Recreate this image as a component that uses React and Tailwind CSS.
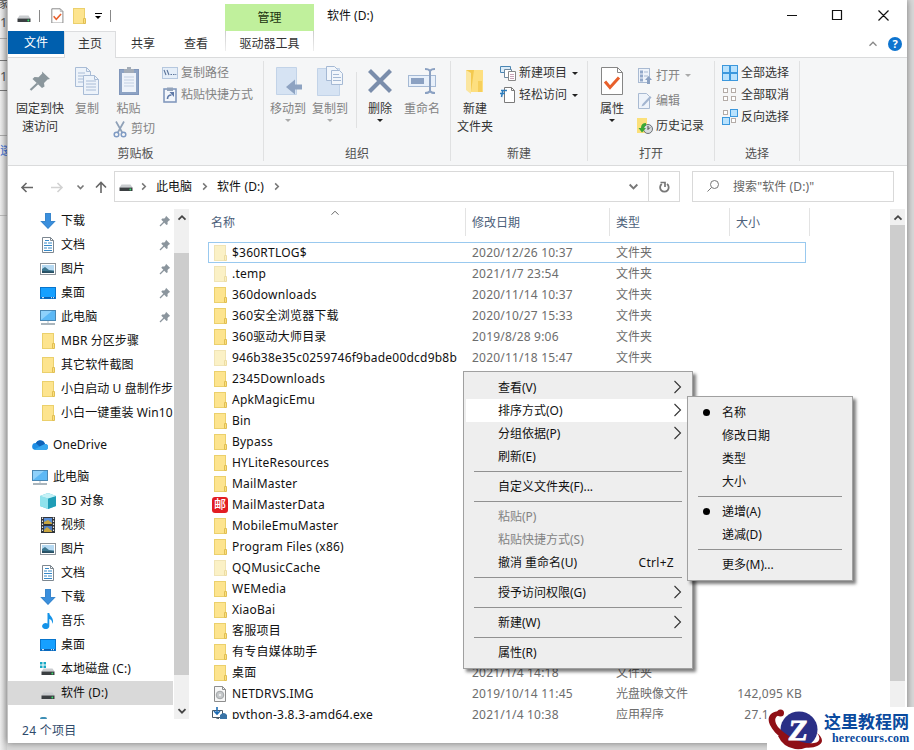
import React from "react";

const FONT = "font-['Noto_Sans','Noto_Sans_CJK_SC',sans-serif]";

/* ---------- small icons ---------- */
const Folder = ({ pale }) => (
  <svg width="16" height="16" viewBox="0 0 16 16" className="shrink-0">
    <rect x="2.500" y=".5" width="11" height="15" fill={pale ? "#fbf1c6" : "#fde48e"} stroke={pale ? "#f0e4b6" : "#ebd06c"} />
    <path d="M12.500 10.500h2v5h-2z" fill={pale ? "#fbf0c0" : "#fde07c"} stroke={pale ? "#ecdca4" : "#e0be54"} />
  </svg>
);
const Down = () => (
  <svg width="16" height="16" viewBox="0 0 16 16"><path d="M5 0h6v8h4.800L8 16 .2 8H5z" fill="#3a8fdd" /><path d="M5.500.500h5v8h4L8 15.200 1.500 8.500h4z" fill="none" stroke="#3a86cc" /></svg>
);
const Doc = () => (
  <svg width="16" height="16" viewBox="0 0 16 16"><path d="M2.500.500h8l3 3v12h-11z" fill="#fff" stroke="#7d8790" /><path d="M10.500.500v3h3" fill="none" stroke="#7d8790" /><path d="M4 6h3M8 6h4M4 8.500h8M4 11h3M8 11h4M4 13.500h8M5 3.500h4" stroke="#3789c8" strokeWidth="1.200" /></svg>
);
const Pic = () => (
  <svg width="16" height="16" viewBox="0 0 16 16"><rect x=".5" y="2.500" width="15" height="11" fill="#fff" stroke="#8d949a" /><path d="M2 4h12v8H2z" fill="#b5d9f2" /><path d="M2 8l3-2 4 3 5 .5V12H2z" fill="#3d7790" /><path d="M2 10l12 .5V12H2z" fill="#274f63" /></svg>
);
const Desk = () => (
  <svg width="16" height="16" viewBox="0 0 16 16"><rect x=".5" y="2.500" width="15" height="11" fill="#16a0ff" stroke="#0875cc" /><path d="M1 12h14v1.500H1z" fill="#0a5fb0" /><path d="M2 12.700h2M11 12.700h1M13 12.700h1" stroke="#fff" /></svg>
);
const PC = () => (
  <svg width="16" height="16" viewBox="0 0 16 16"><rect x=".5" y="1.500" width="15" height="10" fill="#5cb8f5" stroke="#4a87b3" /><path d="M1 11V2h11z" fill="#8ed1fb" /><path d="M7 12h2v2H7z" fill="#d5dee4" /><path d="M1 15h14" stroke="#7c8d98" strokeWidth="1.300" /></svg>
);
const Cloud = () => (
  <svg width="16" height="16" viewBox="0 0 16 16"><path d="M3.500 13a3.500 3.500 0 0 1 .3-7A5 5 0 0 1 13 7a3 3 0 0 1 0 6z" fill="#1f8fe5" /><path d="M3.800 6A5 5 0 0 1 13 7L7.500 9.500z" fill="#0f62b8" /><path d="M2 12.500L13 7a3 3 0 0 1 0 6H3.500z" fill="#38a8ef" /></svg>
);
const Cube = () => (
  <svg width="16" height="16" viewBox="0 0 16 16"><path d="M0 3l8-3 8 3v10l-8 3-8-3z" fill="#4cc4d8" /><path d="M0 3l8 2.500V16l-8-3z" fill="#8fe2ec" /><path d="M8 5.500L16 3v10l-8 3z" fill="#1f9db6" /><path d="M0 3l8-3 8 3-8 2.500z" fill="#c4f1f6" /></svg>
);
const Film = () => (
  <svg width="16" height="16" viewBox="0 0 16 16"><path d="M1 0h14v16H1z" fill="#30343a" /><path d="M4 1h8v6H4z" fill="#5b8fd8" /><path d="M4 9h8v6H4z" fill="#4f7fc4" /><path d="M4 5l4-2 4 3v1H4zM4 13l3-3 5 4v1H4z" fill="#c9a640" /><path d="M2.500.500v15M13.500.500v15" stroke="#e8e8e8" strokeWidth="1.200" strokeDasharray="1.500 1.500" /></svg>
);
const Music = () => (
  <svg width="16" height="16" viewBox="0 0 16 16"><path d="M7.500 0h1.800c.2 3 4 4.200 3.700 8.500-.1 1.200-.6 2-.9 2.500.4-3-1-4.300-2.800-5v6.800A3.600 3 0 1 1 7.500 10.500z" fill="#1593e8" /></svg>
);
const Disk = ({ win }) => (
  <svg width="16" height="16" viewBox="0 0 16 16" className="shrink-0">{win && <path d="M0 1h2.500v2.500H0zM3.500 1H6v2.500H3.500zM0 4.500h2.500V7H0zM3.500 4.500H6V7H3.500z" fill="#18a8c4" />}<path d="M3.500 7.500h9l2 3h-13z" fill="#c9cccf" /><path d="M1.500 10.500h13V14h-13z" fill="#3b3f42" /><circle cx="12.300" cy="12.500" r=".9" fill="#35e06a" /></svg>
);
const PinS = () => (
  <svg width="12" height="12" viewBox="0 0 12 12"><path d="M7 .8L11.200 5l-1.200.5L8.500 7l.2 2.200L7.500 10 2.300 4.700 3.200 3.500l2.200.1L6.700 2z" fill="#8b959d" /><path d="M5 7L1 11" stroke="#8b959d" strokeWidth="1.200" /></svg>
);
const Img = () => (
  <svg width="16" height="16" viewBox="0 0 16 16"><path d="M2.500.500h8l3 3v12h-11z" fill="#f7f7f7" stroke="#8d8d8d" /><path d="M10.500.500v3h3" fill="none" stroke="#8d8d8d" /><circle cx="8" cy="9" r="3.800" fill="#c5c8ca" stroke="#a3a6a8" /><circle cx="8" cy="9" r="1.200" fill="#eee" /></svg>
);
const Py = () => (
  <svg width="16" height="16" viewBox="0 0 16 16"><path d="M.5 3.500h10v7H.5z" fill="#fff" stroke="#4a5a68" /><path d="M3 13l3-2 2 2" fill="none" stroke="#4a5a68" /><path d="M5 0v6M2 4l3 3 3-3" fill="none" stroke="#1e6cb4" strokeWidth="1.600" /><path d="M8 8q4-4 7 0v4H8z" fill="#3873a6" /><path d="M9 13h7v3H9z" fill="#ffd94a" /></svg>
);
const Mail = () => (
  <span className="flex h-4 w-4 shrink-0 items-center justify-center rounded-[3px] bg-[#e21c22] text-[12px] leading-none font-medium text-white">邮</span>
);

const Chev = ({ d = "right", s = 10, c = "#555", w = 1.3 }) => {
  const p = { right: "M3.500 1.500L7 5 3.500 8.500", down: "M1.500 3.200L5 6.700 8.500 3.200", up: "M1.500 6.700L5 3.200 8.500 6.700" }[d];
  return <svg width={s} height={s} viewBox="0 0 10 10" className="shrink-0"><path d={p} fill="none" stroke={c} strokeWidth={w} /></svg>;
};
const Tri = ({ c = "#222" }) => <svg width="6" height="3" viewBox="0 0 6 3" className="shrink-0"><path d="M0 0h6L3 3z" fill={c} /></svg>;

/* ---------- ribbon ---------- */
const Big = ({ w, icon, lines, dim, arrow, arrowColor }) => (
  <div className={`flex shrink-0 flex-col items-center ${w} ${dim ? "text-[#838383]" : "text-[#333]"}`}>
    <div className="mb-[2px] flex h-[34px] items-center justify-center">{icon}</div>
    {lines.map((l) => <div key={l} className="h-[18px] leading-[18px]">{l}</div>)}
    {arrow && <div className="-mt-px flex h-[6px] items-center"><Tri c={arrowColor} /></div>}
  </div>
);
const Small = ({ icon, text, dim, h = "h-[22px]", gap = "gap-[3px]", arrow }) => (
  <div className={`flex items-center ${h} ${gap} ${dim ? "text-[#838383]" : "text-[#333]"}`}>
    <span className="flex h-4 w-4 items-center justify-center">{icon}</span>
    <span>{text}</span>
    {arrow && <span className="ml-[2px] flex"><Tri c={dim ? "#aaa" : "#222"} /></span>}
  </div>
);
const Group = ({ w, label, children }) => (
  <div className={`flex shrink-0 flex-col ${w}`}>
    <div className="flex h-[87px] pt-[6px]">{children}</div>
    <div className="flex h-[18px] items-center justify-center text-[#505050]">{label}</div>
  </div>
);
const Line = () => <div className="mt-[3px] h-[100px] w-px shrink-0 bg-[#e0e1e2]" />;

const BigPin = () => <svg width="24" height="24" viewBox="0 0 24 24"><path d="M14 2.500l8 7.500-2.500.5-3.500 3.500.5 3.500-2.500 1.500L4.500 10l2-2 4 .2L14.200 4.500z" fill="#8b979d" /><path d="M9.500 14.500L2.500 21" stroke="#8b979d" strokeWidth="2.200" /></svg>;
const BigCopy = () => (
  <svg width="26" height="30" viewBox="0 0 26 30"><g fill="#edf3fa" stroke="#a9bcd6"><path d="M1.500 1.500h11l4 4v15h-15z" /><path d="M9.500 9.500h11l4 4v15h-15z" /><path d="M12.500 1.500v4h4M20.500 9.500v4h4M4 7h7M4 10h5M4 13h5M4 16h5M12 15h10M12 18h10M12 21h10M12 24h10" fill="none" /></g></svg>
);
const BigPaste = () => (
  <svg width="22" height="30" viewBox="0 0 22 30"><rect x="1.500" y="3.500" width="19" height="25" fill="#8da3c4" stroke="#8096ba" /><path d="M4 7h14v19H4z" fill="#eef3fa" /><path d="M6 3h3V1h4v2h3v4H6z" fill="#a4adb8" /><path d="M6 11h10M6 14h10M6 17h10M6 20h10" stroke="#c3d0e2" /></svg>
);
const MoveTo = () => (
  <svg width="28" height="30" viewBox="0 0 28 30"><path d="M2.500 1.500h20v27h-20z" fill="#d6e3f3" stroke="#c2d3e8" /><path d="M28 18.500v5h-7v5l-9-7.500 9-7.500v5z" fill="#8ea3c2" /></svg>
);
const CopyTo = () => (
  <svg width="28" height="32" viewBox="0 0 28 32"><path d="M1.500 3.500h22v27h-22z" fill="#d6e3f3" stroke="#c2d3e8" /><g fill="#f2f6fb" stroke="#a5b9d4"><path d="M10.500 1.500h8l3 3v11h-11z" /><path d="M15.500 5.500h8l3 3v11h-11z" /><path d="M17 9.500h6M17 12.500h8M17 15.500h8" /></g></svg>
);
const Del = () => <svg width="26" height="26" viewBox="0 0 26 26"><path d="M2.500 2.500l21 21M23.500 2.500l-21 21" stroke="#7a8dab" strokeWidth="4.200" /></svg>;
const Rename = () => (
  <svg width="30" height="28" viewBox="0 0 30 28"><rect x="1.500" y="8.500" width="27" height="11" fill="#e8f0fa" stroke="#a5b9d4" /><path d="M4 11h13v6H4z" fill="#8ba1c2" /><path d="M18 2q4 0 5 2 1-2 5-2M18 26q4 0 5-2 1 2 5 2M23 4v20" fill="none" stroke="#8ba1c2" strokeWidth="2" /></svg>
);
const BigFolder = () => (
  <svg width="20" height="28" viewBox="0 0 20 28"><path d="M1 3h8l3 2h6v20H4z" fill="#f3c94f" /><path d="M9 3h9v22H6z" fill="#fddf80" /><path d="M1 3l5 3v21l-5-4z" fill="#fbe6a0" /><path d="M13 14h4v11h-4z" fill="#f6cf5c" /></svg>
);
const Props = ({ s = 1 }) => (
  <svg width={24 * s} height={30 * s} viewBox="0 0 24 30"><path d="M1.500 1.500h16l5 5v22h-21z" fill="#fff" stroke="#868686" strokeWidth={s < 1 ? 1.8 : 1} /><path d="M17.500 1.500v5h5" fill="none" stroke="#868686" /><path d="M5 15.500l5 6 9-10" fill="none" stroke="#e8602c" strokeWidth="3" /></svg>
);
const PathI = () => <svg width="16" height="12" viewBox="0 0 16 12"><rect x=".5" y=".5" width="15" height="11" fill="#e5eef8" stroke="#b5c7de" /><path d="M2 3l2 5M5 3l2 5M8.500 7.500h1.500M11 7.500h1.500M13.300 7.500h1" stroke="#5a7399" strokeWidth="1.100" /></svg>;
const PasteLink = () => <svg width="14" height="16" viewBox="0 0 14 16"><rect x="1" y="2" width="12" height="13" fill="#f2f6fb" stroke="#8399bd" strokeWidth="1.600" /><path d="M4 .5h6V4H4z" fill="#93a3ba" /><path d="M4.500 12q0-4 4-4" fill="none" stroke="#607aa8" strokeWidth="1.600" /><path d="M6.500 5H11v5z" fill="#607aa8" /></svg>;
const Cut = () => <svg width="14" height="17" viewBox="0 0 14 17"><path d="M3 .5L9.500 12M11 .5L4.500 12" stroke="#8fa1b8" strokeWidth="1.700" /><g fill="none" stroke="#7f9bc4" strokeWidth="1.500"><circle cx="3.500" cy="13.500" r="2.300" /><circle cx="10.500" cy="13.500" r="2.300" /></g></svg>;
const NewItem = () => <svg width="16" height="16" viewBox="0 0 16 16"><path d="M.5 1.500h10v6H.5z" fill="#dcecf8" stroke="#4a86b4" /><path d="M4.500 4.500h7v8h-7z" fill="#fff" stroke="#6f8aa0" /><path d="M8.500 6.500h7v9h-7z" fill="#fff" stroke="#888" /><path d="M10 9.500h4M10 11.500h4M10 13.500h4" stroke="#c9a2b8" /></svg>;
const Easy = () => <svg width="16" height="16" viewBox="0 0 16 16"><path d="M4.500.500h7l3 3v12h-10z" fill="#fff" stroke="#7a7a7a" /><path d="M11.500.500v3h3" fill="none" stroke="#7a7a7a" /><path d="M1 3.500h6M0 6.500h5M3 3L1.500 10" fill="none" stroke="#2d7dbd" strokeWidth="1.500" /></svg>;
const OpenI = () => <svg width="16" height="16" viewBox="0 0 16 16"><rect x="1.500" y=".5" width="11" height="14" fill="#eef3fa" stroke="#a9bad2" /><path d="M3 2.500h3v3H3zM3 6.500h3v3H3zM3 10.500h3v3H3z" fill="#92a8c9" /><path d="M7 4h4M7 8h4" stroke="#a9bad2" /><path d="M11.500 8L15 12h-2v4h-3v-4H8z" fill="#8ba1c2" /></svg>;
const EditI = () => <svg width="16" height="16" viewBox="0 0 16 16"><path d="M1.500.500h8l3 3v12h-11z" fill="#eef3fa" stroke="#a9bad2" /><path d="M13 3l1.500 1.500-7.500 8-2.500 1 1-2.500z" fill="#a3b5d0" /></svg>;
const Hist = () => <svg width="16" height="16" viewBox="0 0 16 16"><path d="M0 0h10v15H0z" fill="#fbe07a" /><circle cx="11" cy="11" r="4.500" fill="#d9dcde" stroke="#6c7277" /><path d="M11 8v3.500l2-2" fill="none" stroke="#444" /><path d="M9 5Q4 5 4 10H1.500L5 14.500 9 10H7Q7 8 9 7.500z" fill="#3aa835" /></svg>;
const Sel = ({ on }) => (
  <svg width="16" height="16" viewBox="0 0 16 16">{[[0, 0], [8, 0], [0, 8], [8, 8]].map(([x, y], i) => on[i]
    ? <rect key={i} x={x + .5} y={y + .5} width="7" height="7" fill="#b9e2fd" stroke="#3c98dd" />
    : <rect key={i} x={x + 1.5} y={y + 1.5} width="4" height="4" fill="#fff" stroke="#b4aca8" />)}</svg>
);

/* ---------- data ---------- */
const nav = [
  ["下载", Down, 1], ["文档", Doc, 1], ["图片", Pic, 1], ["桌面", Desk, 1], ["此电脑", PC, 1],
  ["MBR 分区步骤", Folder], ["其它软件截图", Folder], ["小白启动 U 盘制作步", Folder], ["小白一键重装 Win10", Folder],
];
const nav2 = [["3D 对象", Cube], ["视频", Film], ["图片", Pic], ["文档", Doc], ["下载", Down], ["音乐", Music], ["桌面", Desk], ["本地磁盘 (C:)", () => <Disk win />], ["软件 (D:)", Disk]];
const files = [
  ["$360RTLOG$", "2020/12/26 10:37", "p"], [".temp", "2021/1/7 23:54", "p"], ["360downloads", "2020/11/14 10:37"],
  ["360安全浏览器下载", "2020/10/27 15:33"], ["360驱动大师目录", "2019/8/28 9:06"], ["946b38e35c0259746f9bade00dcd9b8b", "2020/11/18 15:47", "p"],
  ["2345Downloads"], ["ApkMagicEmu"], ["Bin"], ["Bypass"], ["HYLiteResources"], ["MailMaster"], ["MailMasterData", "", "mail"],
  ["MobileEmuMaster"], ["Program Files (x86)"], ["QQMusicCache", "", "p"], ["WEMedia"], ["XiaoBai"], ["客服项目"], ["有专自媒体助手"],
  ["桌面", "2021/1/4 14:18"], ["NETDRVS.IMG", "2019/10/14 11:45", "img", "光盘映像文件", "142,095 KB"], ["python-3.8.3-amd64.exe", "2021/1/4 10:38", "py", "应用程序", "27,162 KB"],
];

const NavRow = ({ item, sel, base = "pl-8" }) => {
  const [t, Icon, pin] = item;
  return (
    <div className={`flex h-6 shrink-0 items-center overflow-hidden ${base} ${sel ? "mr-px bg-[#d9d9d9]" : ""}`}>
      <span className="flex w-[21px] shrink-0"><Icon /></span>
      <span className="grow tracking-[0.1px]">{t}</span>
      {pin && <span className="mr-[3px]"><PinS /></span>}
    </div>
  );
};
const MenuRow = ({ t, sub, dim, hot, key2 }) => (
  <div className={`mx-[2px] flex h-[23px] items-center pr-[7px] pl-8 ${hot ? "bg-white" : ""} ${dim ? "text-[#838383]" : ""}`}>
    <span className="grow">{t}</span>
    {key2 && <span className="pr-[9px] tracking-[0.3px]">{key2}</span>}
    {sub && <svg width="10" height="14" viewBox="0 0 10 14" className="-mt-[2px]"><path d="M1.500 1L7.500 7l-6 6" fill="none" stroke="#333" strokeWidth="1.100" /></svg>}
  </div>
);
const SubRow = ({ t, dot }) => (
  <div className="flex h-[23px] items-center pl-[15px]">
    <span className="w-[19px]">{dot && <span className="block h-[7px] w-[7px] rounded-full bg-black" />}</span>{t}
  </div>
);
const Sep = () => <div className="mx-[10px] flex h-[7px] items-center"><div className="h-px w-full bg-[#919191]" /></div>;

export default function App() {
  return (
    <div className={`relative flex h-[750px] w-[914px] overflow-hidden bg-[#d9d9d9] whitespace-nowrap text-[12px] leading-[16px] text-[#111] ${FONT}`}>
      <div className="h-[750px] w-[7px] shrink-0 overflow-hidden bg-linear-to-r from-[#efefef] to-[#cfcfcf] text-[#555]">
        <div className="flex h-[39px] flex-col border-b border-[#aaa]">
          <span className="-mt-[6px] -ml-[5px] h-[20px] text-[13px]">缘</span><span className="text-[13px]">1(</span>
        </div>
        <div className="h-[22px] border-b border-[#777]" />
        <div className="h-[30px] border-b border-[#777] pt-[7px] text-[13px]">1</div>
        <div className="h-[45px] border-b border-[#aaa]" />
        <div className="h-[80px] border-b border-[#bbb] pt-[7px] text-[#3d6fd0]">逶</div>
      </div>

      <div className="flex h-[743px] w-[900px] shrink-0 flex-col border-l border-[#c3c3c3] bg-white shadow-[0_0_7px_rgba(0,0,0,0.45)]">
        {/* title bar */}
        <div className="flex h-[31px] shrink-0">
          <div className="flex h-[31px] w-[217px] items-center pl-[8px]">
            <Disk /><div className="ml-[7px] h-3 w-px bg-[#888]" />
            <span className="ml-[11px] flex"><Props s={0.53} /></span>
            <span className="ml-[7px] flex"><Folder /></span>
            <span className="ml-[8px] flex flex-col items-center gap-[2px]"><span className="h-px w-[7px] bg-black" /><Tri c="#000" /></span>
            <div className="ml-[8px] h-3 w-px bg-[#888]" />
          </div>
          <div className="mt-[4px] flex h-[27px] w-[89px] items-center justify-center bg-[#c0f09c] text-[#1d3410]">管理</div>
          <div className="flex grow items-center pl-[13px]">软件 (D:)</div>
          <svg width="138" height="31" viewBox="0 0 138 31"><path d="M18 15.500h10M63.500 10.500h9v9h-9zM109.500 10.500l10 10M119.500 10.500l-10 10" fill="none" stroke="#111" strokeWidth="1.200" /></svg>
        </div>
        {/* tabs */}
        <div className="flex h-[26px] shrink-0 items-start text-[#333]">
          <div className="flex h-[23px] w-[56px] items-center justify-center bg-[#005fae] text-white">文件</div>
          <div className="z-10 flex h-[27px] w-[52px] items-center justify-center border-x border-t border-[#dcdddf] bg-[#f5f6f7] pb-[2px]">主页</div>
          <div className="flex h-[25px] w-[53px] items-center justify-center pl-px">共享</div>
          <div className="flex h-[25px] w-[56px] items-center justify-center pr-[2px]">查看</div>
          <div className="flex h-[25px] w-[89px] justify-center">
            <span className="h-5 w-px bg-linear-to-b from-[#ccc] to-[#eee]" />
            <span className="flex grow items-center justify-center">驱动器工具</span>
            <span className="h-5 w-px bg-linear-to-b from-[#ccc] to-[#eee]" />
          </div>
          <div className="flex h-[26px] grow items-center justify-end gap-[10px] pr-[5px]">
            <Chev d="up" c="#888" w={1.3} />
            <span className="flex h-[14px] w-[14px] items-center justify-center rounded-full bg-[#0e74cf] text-[11px] font-bold text-white">?</span>
          </div>
        </div>
        {/* ribbon */}
        <div className="flex h-[109px] shrink-0 border-y border-[#dadbdc] bg-[#f5f6f7]">
          <Group w="w-[255px]" label="剪贴板">
            <div className="w-1" />
            <Big w="w-[56px]" icon={<BigPin />} lines={["固定到快", "速访问"]} />
            <Big w="w-[38px]" dim icon={<BigCopy />} lines={["复制"]} />
            <div className="w-[55px]">
              <Big w="w-[45px]" dim icon={<BigPaste />} lines={["粘贴"]} />
              <div className="flex h-[22px] items-center gap-[4px] pl-[7px] text-[#838383]"><Cut />剪切</div>
            </div>
            <div className="-mt-[2px] pl-px">
              <Small dim icon={<PathI />} text="复制路径" />
              <Small dim icon={<PasteLink />} text="粘贴快捷方式" />
            </div>
          </Group>
          <Line />
          <Group w="w-[186px]" label="组织">
            <div className="w-[3px]" />
            <Big w="w-[42px]" dim arrow arrowColor="#aaa" icon={<MoveTo />} lines={["移动到"]} />
            <Big w="w-[42px]" dim arrow arrowColor="#aaa" icon={<CopyTo />} lines={["复制到"]} />
            <div className="mt-[8px] mr-[2px] ml-[5px] h-[56px] w-px bg-[#e0e1e2]" />
            <Big w="w-[42px]" arrow icon={<Del />} lines={["删除"]} />
            <Big w="w-[42px]" dim icon={<Rename />} lines={["重命名"]} />
          </Group>
          <Line />
          <Group w="w-[136px]" label="新建">
            <div className="w-[3px]" />
            <Big w="w-[42px]" icon={<BigFolder />} lines={["新建", "文件夹"]} />
            <div className="-mt-[2px] pl-[4px]">
              <Small arrow icon={<NewItem />} text="新建项目" />
              <Small arrow icon={<Easy />} text="轻松访问" />
            </div>
          </Group>
          <Line />
          <Group w="w-[126px]" label="打开">
            <div className="w-[5px]" />
            <Big w="w-[38px]" arrow icon={<Props />} lines={["属性"]} />
            <div className="-mt-[1px] pl-[6px]">
              <Small dim arrow h="h-[25px]" icon={<OpenI />} text="打开" />
              <Small dim h="h-[25px]" icon={<EditI />} text="编辑" />
              <Small h="h-[25px]" icon={<Hist />} text="历史记录" />
            </div>
          </Group>
          <Line />
          <Group w="w-[84px]" label="选择">
            <div className="-mt-[2px] pl-[7px]">
              <Small icon={<Sel on={[1, 1, 1, 1]} />} text="全部选择" />
              <Small icon={<Sel on={[0, 0, 0, 0]} />} text="全部取消" />
              <Small icon={<Sel on={[0, 1, 1, 0]} />} text="反向选择" />
            </div>
          </Group>
          <Line />
        </div>
        {/* address bar */}
        <div className="flex h-[42px] shrink-0 items-center pb-px">
          <svg width="106" height="20" viewBox="0 0 106 20" fill="none" strokeWidth="1.600"><path d="M14 10.500h11M18.500 6L14 10.500l4.500 4.500" stroke="#666" /><path d="M43 10.500h11M49.500 6L54 10.500 49.500 15" stroke="#d2d2d2" /><path d="M69.500 8.500l3 3 3-3" stroke="#777" /><path d="M93 16V5.500M88 10.500l5-5 5 5" stroke="#666" /></svg>
          <div className="flex h-[31px] w-[566px] items-center border border-[#d9d9d9] pl-[3px]">
            <span className="-mt-[3px] flex"><Disk /></span><span className="mx-[5px] flex"><Chev s={9} c="#777" w={1.7} /></span>
            <span className="ml-[3px]">此电脑</span><span className="mx-[8px] flex"><Chev s={9} c="#777" w={1.7} /></span>
            <span className="tracking-[0.1px]">软件 (D:)</span><span className="ml-[8px] flex grow"><Chev s={9} c="#777" w={1.7} /></span>
            <Chev d="down" s={11} c="#777" w={1.7} />
            <div className="ml-[9px] h-full w-px bg-[#d9d9d9]" />
            <svg width="30" height="20" viewBox="0 0 30 20" fill="none"><path d="M12.800 7A4.300 4.300 0 1 0 18 7" stroke="#777" strokeWidth="1.800" /><path d="M11.500 5.500H16V10" stroke="#777" strokeWidth="1.700" /></svg>
          </div>
          <div className="ml-[12px] flex h-[31px] w-[202px] items-center border border-[#d9d9d9] pl-[13px] text-[#666]">
            <svg width="15" height="15" viewBox="0 0 15 15" fill="none" stroke="#777"><circle cx="8.500" cy="5.500" r="4" /><path d="M5.500 8.500L1.500 12.500" /></svg>
            <span className="ml-[12px] tracking-[0.1px]">搜索"软件 (D:)"</span>
          </div>
        </div>
        {/* body */}
        <div className="flex h-[511px] shrink-0 overflow-hidden">
          <div className="flex w-[166px] shrink-0 flex-col overflow-hidden">
            <div className="h-px shrink-0" />
            {nav.map((n) => <NavRow key={n[0]} item={n} />)}
            <div className="h-2 shrink-0" />
            <NavRow base="pl-6" item={["OneDrive", Cloud]} />
            <div className="h-2 shrink-0" />
            <NavRow base="pl-6" item={["此电脑", PC]} />
            {nav2.map((n, i) => <NavRow key={n[0]} item={n} sel={i === 8} />)}
            <div className="mt-[12px] ml-[32px] h-[2px] w-[7px] shrink-0 rounded-t-full bg-[#3f8fb5]" />
          </div>
          <div className="mt-px flex w-[15px] shrink-0 flex-col items-center bg-[#f0f0f0]">
            <div className="flex h-[44px] shrink-0 pt-[4px]"><Chev d="up" c="#444" w={1.8} /></div>
            <div className="h-[422px] w-full shrink-0 bg-[#cdcdcd]" />
            <div className="flex grow items-end pb-[3px]"><Chev d="down" c="#444" w={1.8} /></div>
          </div>
          <div className="flex w-[701px] shrink-0 flex-col overflow-hidden pl-[19px]">
            <div className="flex h-[34px] shrink-0 text-[#4c607a]">
              <div className="flex h-[28px] w-[258px] border-r border-[#e3e3e3] pl-[3px]"><span className="w-[119px] pt-[7px]">名称</span><Chev d="up" c="#666" w={1} /></div>
              <div className="h-[28px] w-[144px] border-r border-[#e3e3e3] pt-[7px] pl-[6px]">修改日期</div>
              <div className="h-[28px] w-[120px] border-r border-[#e3e3e3] pt-[7px] pl-[6px]">类型</div>
              <div className="h-[28px] w-[80px] border-r border-[#e3e3e3] pt-[7px] pl-[6px]">大小</div>
            </div>
            {files.map(([n, d, k, t, s], i) => (
              <div key={n} className={`flex h-[21px] w-[598px] shrink-0 items-center text-[#6d6d6d] ${i === 0 ? "outline outline-1 -outline-offset-1 outline-[#99c9ef]" : ""}`}>
                <span className="flex w-[24px] pl-[4px]">{k === "mail" ? <Mail /> : k === "img" ? <Img /> : k === "py" ? <Py /> : <Folder pale={k === "p"} />}</span>
                <span className="w-[240px] tracking-[0.22px] text-[#111]">{n}</span>
                <span className="w-[144px] tracking-[0.2px]">{d}</span>
                <span className="w-[90px]">{t || "文件夹"}</span>
                <span className="w-[96px] text-right tracking-[0.2px]">{s}</span>
              </div>
            ))}
          </div>
          <div className="mt-px flex w-[15px] shrink-0 flex-col items-center bg-[#f0f0f0]">
            <div className="flex h-[16px] pt-[4px]"><Chev d="up" c="#444" w={1.8} /></div>
            <div className="h-[456px] w-full bg-[#cdcdcd]" />
          </div>
        </div>
        {/* status bar */}
        <div className="flex grow items-center pl-[14px] tracking-[0.3px] text-[#2f4a6b]">24 个项目</div>
      </div>

      {/* context menu */}
      <div className="absolute top-[371px] left-[463px] w-[230px] border border-[#a0a0a0] bg-[#eeeeee] py-1 shadow-[3px_3px_3px_rgba(0,0,0,0.5)]">
        <MenuRow t="查看(V)" sub />
        <MenuRow t="排序方式(O)" sub hot />
        <MenuRow t="分组依据(P)" sub />
        <MenuRow t="刷新(E)" />
        <Sep />
        <MenuRow t="自定义文件夹(F)..." />
        <Sep />
        <MenuRow t="粘贴(P)" dim />
        <MenuRow t="粘贴快捷方式(S)" dim />
        <MenuRow t="撤消 重命名(U)" key2="Ctrl+Z" />
        <Sep />
        <MenuRow t="授予访问权限(G)" sub />
        <Sep />
        <MenuRow t="新建(W)" sub />
        <Sep />
        <MenuRow t="属性(R)" />
      </div>
      <div className="absolute top-[396px] left-[687px] w-[166px] border border-[#a0a0a0] bg-[#eeeeee] py-1 shadow-[3px_3px_3px_rgba(0,0,0,0.5)]">
        <SubRow t="名称" dot />
        <SubRow t="修改日期" />
        <SubRow t="类型" />
        <SubRow t="大小" />
        <Sep />
        <SubRow t="递增(A)" dot />
        <SubRow t="递减(D)" />
        <Sep />
        <SubRow t="更多(M)..." />
      </div>

      {/* watermark */}
      <div className="absolute top-[707px] left-[767px] flex h-[43px] w-[147px] bg-white">
        <svg width="57" height="43" viewBox="0 0 57 43" className="shrink-0">
          <ellipse cx="32" cy="22.500" rx="18.500" ry="18" fill="#2a2f86" />
          <path d="M15 4C4 3-1 10 3 18c5 10 18 20 31 22 12 2 20-1 21-6 0-3-2-6-5-8 4 5 3 9-3 10C36 38 20 30 11 20 6 13 8 8 15 8z" fill="#8f0f16" />
          <circle cx="13.500" cy="6" r="3.500" fill="#8f0f16" />
          <path d="M11 29q5 11 17 13 10 1 15-4-14-1-23-9z" fill="#8f0f16" />
          <text x="22" y="33" fontFamily="Liberation Serif" fontWeight="bold" fontSize="29" fill="#fff" stroke="#fff" strokeWidth=".8" transform="skewX(-6) translate(2 0)">Z</text>
        </svg>
        <div className="flex flex-col pt-[4px] text-[#0a4a9e]">
          <span className="font-['Noto_Sans_CJK_SC',sans-serif] text-[17px] leading-[19px] font-bold">这里教程网</span>
          <span className="pl-[8px] font-['Liberation_Serif',serif] text-[12px] leading-[16px] font-bold tracking-[0.2px]">herecours.com</span>
        </div>
      </div>
    </div>
  );
}
